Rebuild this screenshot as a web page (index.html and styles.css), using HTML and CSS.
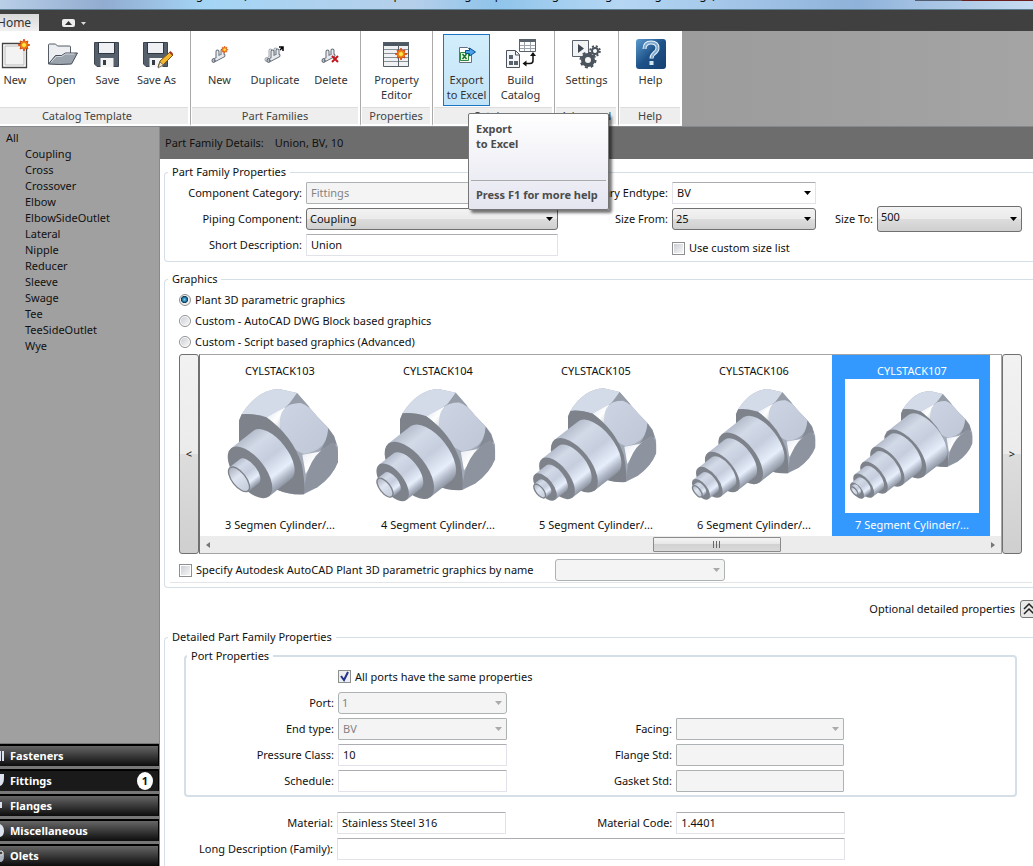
FILE: index.html
```html
<!DOCTYPE html>
<html lang="en">
<head>
<meta charset="utf-8">
<title>Catalog Editor</title>
<link rel="stylesheet" href="styles.css">
</head>
<body>
<header class="titlebar"><span class="titlebar-text">Catalog Editor (C:\Users\Standard\Desktop\DIN catalogs import\Fittings\Catalog buildings Fittings)</span><span class="window-buttons"></span></header>
<nav class="tabbar">
  <button class="tab" type="button">Home</button>
  <button class="tab-toggle" type="button" aria-label="Minimize ribbon">
    <svg width="28" height="8" viewBox="0 0 28 8"><rect width="13" height="8" rx="2" fill="#eee"/><path d="M3 6l3.500-4 3.500 4z" fill="#333"/><path d="M19 3h5l-2.500 3z" fill="#ddd"/></svg>
  </button>
</nav>

<div class="ribbon">
  <section class="group group-template">
    <div class="tools">
      <button class="tool" type="button"><svg class="icon" viewBox="0 0 32 32"><path d="M3.500 5.500h24v24h-24z" fill="#fff" stroke="#444" stroke-width="1.300"/><path d="M6 8h19v19H6z" fill="#f3f3f3" stroke="#bbb"/><use href="#spark" x="19" y="1"/></svg>New</button>
      <button class="tool" type="button"><svg class="icon" viewBox="0 0 32 32"><path d="M2.500 26V7q0-1 1-1h6l2 2h12q1 0 1 1v7" fill="#eceef1" stroke="#555c66"/><path d="M2.500 26l7-8.500h6l4-2.500h12l-6 11q-12 1-23 0z" fill="#9aa2ac" stroke="#474d56"/><path d="M5 24l5.500-5.500h5l4-2.500h9" fill="none" stroke="#d4d9df"/></svg>Open</button>
      <button class="tool" type="button"><svg class="icon" viewBox="0 0 32 32"><use href="#disk"/></svg>Save</button>
      <button class="tool" type="button"><svg class="icon" viewBox="0 0 32 32"><use href="#disk"/><path d="M17 29l2-6L29 14l3 3-10 10z" fill="#f5b72f" stroke="#7a5410"/><path d="M17 30l2-6 3.500 3z" fill="#f6e3c2" stroke="#555" stroke-width=".7"/><path d="M28 14.500l1.500-1.500 3 3-1.500 1.500z" fill="#a33a24"/></svg>Save As</button>
    </div>
    <h2 class="group-name">Catalog Template</h2>
  </section>
  <section class="group group-families">
    <div class="tools">
      <button class="tool" type="button"><svg class="icon" viewBox="0 0 32 32"><use href="#pipe"/><use href="#spark" transform="translate(17 8) scale(.6)"/></svg>New</button>
      <button class="tool" type="button"><svg class="icon" viewBox="0 0 32 32"><use href="#pipe" x="-2" y="-1" opacity=".6"/><use href="#pipe"/><path d="M20 9h4v4M24 9l-3 3" stroke="#000" stroke-width="1.500" fill="none"/></svg>Duplicate</button>
      <button class="tool" type="button"><svg class="icon" viewBox="0 0 32 32"><use href="#pipe" x="-1"/><path d="M17 18l6 6m0-6l-6 6" stroke="#c4161c" stroke-width="2"/></svg>Delete</button>
    </div>
    <h2 class="group-name">Part Families</h2>
  </section>
  <section class="group group-properties">
    <div class="tools">
      <button class="tool" type="button"><svg class="icon" viewBox="0 0 32 32"><path d="M3 4h26v25H3z" fill="#f0f1f3"/><path d="M3 4h26v4H3z" fill="#4c5764"/><path d="M3 11.500h26M3 15.500h26M3 19.500h26M3 23.500h26" stroke="#8a9098"/><path d="M3.500 4.500h25v24h-25zM18.500 5v24" fill="none" stroke="#555d66"/><use href="#spark" x="15" y="10"/></svg>Property<br>Editor</button>
    </div>
    <h2 class="group-name">Properties</h2>
  </section>
  <section class="group group-catalog">
    <div class="tools">
      <button class="tool tool-hot" type="button"><svg class="icon" viewBox="0 0 32 32"><path d="M8.500 9.500h8l4 4v11h-12z" fill="#fff" stroke="#66707c"/><path d="M9.500 14.500h8v8h-8z" fill="#e8f6e8" stroke="#2f8a3c"/><path d="M11.500 16l4 5m0-5l-4 5" stroke="#17752a" stroke-width="1.500"/><path d="M14.500 12.500h4V10l6 4-6 4v-2.500h-4z" fill="#4aa3e8" stroke="#0b4f94"/></svg>Export<br>to Excel</button>
      <button class="tool" type="button"><svg class="icon" viewBox="0 0 32 32"><path d="M14.500 1.500h16v12h-16z" fill="#fff" stroke="#59626d"/><path d="M14 1h17v3H14z" fill="#59626d"/><path d="M15 7.500h15M15 10.500h15M19.500 4v9M25.500 4v9" stroke="#9ba3ad"/><path d="M1.500 12.500h9l4 4v13h-13z" fill="#f5f6f7" stroke="#4a535e"/><path d="M10.500 13v4h4" fill="none" stroke="#4a535e"/><path d="M4 17h4v4H4zM4 23h4v4H4zM9 23h4v4H9z" fill="#59626d"/><path d="M20 25.500h5q3 0 3-3V17" fill="none" stroke="#111" stroke-width="1.500"/><path d="M17.500 25.500l4-3v6zM28 14l-3 4h6z" fill="#111"/></svg>Build<br>Catalog</button>
    </div>
    <h2 class="group-name">Catalog</h2>
  </section>
  <section class="group group-advanced">
    <div class="tools">
      <button class="tool" type="button"><svg class="icon" viewBox="0 0 32 32"><path d="M2.500 2.500h16v16h-16z" fill="#f2f3f5" stroke="#59626d"/><path d="M8 6l6 4.500L8 15z" fill="#3f4852"/><circle cx="18" cy="22" r="5" fill="#f4f4f4" stroke="#4b535d" stroke-width="4"/><circle cx="18" cy="22" r="7.500" fill="none" stroke="#4b535d" stroke-width="2" stroke-dasharray="3 2.900"/><circle cx="25" cy="13" r="3" fill="#fff" stroke="#4b535d" stroke-width="2"/><circle cx="25" cy="13" r="4.800" fill="none" stroke="#4b535d" stroke-width="2" stroke-dasharray="2 1.800"/></svg>Settings</button>
    </div>
    <h2 class="group-name">Advanced</h2>
  </section>
  <section class="group group-help">
    <div class="tools">
      <button class="tool" type="button"><svg class="icon" viewBox="0 0 32 32"><rect x="1" y="1" width="30" height="30" rx="3" fill="url(#helpBlue)"/><path d="M9.500 11q0-6.500 6.500-6.500t6.500 5.500q0 3-3.500 5.500-2.500 2-2.500 5" fill="none" stroke="#e8f3fb" stroke-width="4"/><path d="M9.500 11q0-6.500 6.500-6.500t6.500 5.500q0 3-3.500 5.500-2.500 2-2.500 5" fill="none" stroke="#7fa9cd" stroke-width="2"/><path d="M14.500 23h4v4h-4z" fill="#d5e6f3"/></svg>Help</button>
    </div>
    <h2 class="group-name">Help</h2>
  </section>
  <div class="tooltip" role="tooltip">
    <strong class="tooltip-title">Export<br>to Excel</strong>
    <strong class="tooltip-hint">Press F1 for more help</strong>
  </div>
</div>

<div class="workspace">
  <aside class="sidebar">
    <ul class="tree">
      <li>All
        <ul class="subtree">
          <li>Coupling</li><li>Cross</li><li>Crossover</li><li>Elbow</li><li>ElbowSideOutlet</li><li>Lateral</li><li>Nipple</li><li>Reducer</li><li>Sleeve</li><li>Swage</li><li>Tee</li><li>TeeSideOutlet</li><li>Wye</li>
        </ul>
      </li>
    </ul>
    <div class="accordion">
      <button class="category" type="button"><svg class="cat-icon" viewBox="0 0 6 16"><path d="M0 3h1v10H0zM2 3h2v10H2z" fill="#dde3ee"/></svg>Fasteners</button>
      <button class="category category-open" type="button"><svg class="cat-icon" viewBox="0 0 6 16"><path d="M0 1h4v3Q4 12 0 13z" fill="#dde3ee"/></svg>Fittings<span class="badge">1</span></button>
      <button class="category" type="button"><svg class="cat-icon" viewBox="0 0 6 16"><path d="M0 4h2v6H0z" fill="#dde3ee"/></svg>Flanges</button>
      <button class="category" type="button"><svg class="cat-icon" viewBox="0 0 6 16"><path d="M0 1q4 2 4 7t-4 6z" fill="#dde3ee"/></svg>Miscellaneous</button>
      <button class="category" type="button"><svg class="cat-icon" viewBox="0 0 6 16"><path d="M0 3q4-1 4 5t-4 6z" fill="#aab2bf"/><circle cx="1" cy="5" r="2" fill="#444" stroke="#eee"/></svg>Olets</button>
    </div>
  </aside>

  <main class="details">
    <h1 class="details-head"><span>Part Family Details:</span><span>Union, BV, 10</span></h1>

    <fieldset class="box">
      <legend>Part Family Properties</legend>
      <div class="family-grid">
        <label class="lbl c1 r1" for="cat">Component Category:</label><input class="field c2 r1" id="cat" value="Fittings" disabled>
        <label class="lbl c3 r1" for="pend">Primary Endtype:</label><select class="field c4 r1" id="pend"><option>BV</option></select>
        <label class="lbl c1 r2" for="pipc">Piping Component:</label><select class="field raised c2 r2" id="pipc"><option>Coupling</option></select>
        <label class="lbl c3 r2" for="sfrom">Size From:</label><select class="field raised c4 r2" id="sfrom"><option>25</option></select>
        <label class="lbl c5 r2" for="sto">Size To:</label><select class="field raised tall c6 r2" id="sto"><option>500</option></select>
        <label class="lbl c1 r3" for="sdesc">Short Description:</label><input class="field c2 r3" id="sdesc" value="Union">
        <label class="choice low c4 r3 wide"><input class="check" type="checkbox">Use custom size list</label>
      </div>
    </fieldset>

    <fieldset class="box box-graphics">
      <legend>Graphics</legend>
      <div class="graphics">
        <label class="choice"><input class="radio" type="radio" name="gfx" checked>Plant 3D parametric graphics</label>
        <label class="choice"><input class="radio" type="radio" name="gfx">Custom - AutoCAD DWG Block based graphics</label>
        <label class="choice"><input class="radio" type="radio" name="gfx">Custom - Script based graphics (Advanced)</label>
        <div class="carousel">
          <button class="pager" type="button" aria-label="Previous">&lt;</button>
          <div class="list">
            <div class="tiles">
              <figure class="tile"><span>CYLSTACK103</span><svg class="pic" data-fitting="3"></svg><figcaption>3 Segmen Cylinder/...</figcaption></figure>
              <figure class="tile"><span>CYLSTACK104</span><svg class="pic" data-fitting="4"></svg><figcaption>4 Segment Cylinder/...</figcaption></figure>
              <figure class="tile"><span>CYLSTACK105</span><svg class="pic" data-fitting="5"></svg><figcaption>5 Segment Cylinder/...</figcaption></figure>
              <figure class="tile"><span>CYLSTACK106</span><svg class="pic" data-fitting="6"></svg><figcaption>6 Segment Cylinder/...</figcaption></figure>
              <figure class="tile tile-on"><span>CYLSTACK107</span><svg class="pic" data-fitting="7"></svg><figcaption>7 Segment Cylinder/...</figcaption></figure>
            </div>
            <div class="scroll">
              <svg width="4" height="6" viewBox="0 0 4 6"><path d="M4 0v6L0 3z" fill="#777"/></svg>
              <div class="track"><div class="thumb"></div></div>
              <svg width="4" height="6" viewBox="0 0 4 6"><path d="M0 0v6l4-3z" fill="#777"/></svg>
            </div>
          </div>
          <button class="pager" type="button" aria-label="Next">&gt;</button>
        </div>
        <div class="byname">
          <label class="choice"><input class="check" type="checkbox">Specify Autodesk AutoCAD Plant 3D parametric graphics by name</label>
          <select class="field raised byname-select" aria-label="Graphics name" disabled><option></option></select>
        </div>
      </div>
    </fieldset>

    <div class="optional"><span>Optional detailed properties</span><button class="collapse" type="button" aria-label="Collapse"><svg width="12" height="12" viewBox="0 0 12 12"><path d="M1 6l5-5 5 5M1 11l5-5 5 5" fill="none" stroke="#222" stroke-width="1.500"/></svg></button></div>

    <fieldset class="box">
      <legend>Detailed Part Family Properties</legend>
      <fieldset class="ports">
        <legend>Port Properties</legend>
        <div class="port-grid">
          <label class="choice c2 r1 wide"><input class="check" type="checkbox" checked>All ports have the same properties</label>
          <label class="lbl c1 r2" for="port">Port:</label><select class="field raised c2 r2" id="port" disabled><option>1</option></select>
          <label class="lbl c1 r3" for="endt">End type:</label><select class="field c2 r3" id="endt" disabled><option>BV</option></select>
          <label class="lbl c3 r3" for="facing">Facing:</label><select class="field c4 r3" id="facing" disabled><option></option></select>
          <label class="lbl c1 r4" for="press">Pressure Class:</label><input class="field c2 r4" id="press" value="10">
          <label class="lbl c3 r4" for="flange">Flange Std:</label><input class="field c4 r4" id="flange" disabled>
          <label class="lbl c1 r5" for="sched">Schedule:</label><input class="field c2 r5" id="sched">
          <label class="lbl c3 r5" for="gasket">Gasket Std:</label><input class="field c4 r5" id="gasket" disabled>
        </div>
      </fieldset>
      <div class="material-grid">
        <label class="lbl c1 r1" for="mat">Material:</label><input class="field c2 r1" id="mat" value="Stainless Steel 316">
        <label class="lbl c3 r1" for="mcode">Material Code:</label><input class="field c4 r1" id="mcode" value="1.4401">
        <label class="lbl c1 r2" for="ldesc">Long Description (Family):</label><input class="field long r2" id="ldesc">
      </div>
    </fieldset>
  </main>
</div>

<svg class="defs" aria-hidden="true">
  <defs>
    <linearGradient id="helpBlue" x1="0" y1="0" x2="1" y2="1"><stop offset="0" stop-color="#5b9bd0"/><stop offset=".5" stop-color="#1d5288"/><stop offset="1" stop-color="#163f70"/></linearGradient>
    <linearGradient id="steel"><stop offset="0" stop-color="#b6bdcc"/><stop offset=".2" stop-color="#d2d9e7"/><stop offset=".5" stop-color="#c6cddd"/><stop offset=".78" stop-color="#e6eefb"/><stop offset=".9" stop-color="#b3bac9"/><stop offset="1" stop-color="#8f96a3"/></linearGradient>
    <linearGradient id="bore"><stop offset="0" stop-color="#aab1bd"/><stop offset=".4" stop-color="#dfe6f2"/><stop offset="1" stop-color="#c3cad8"/></linearGradient>
    <linearGradient id="flat" x1="0" y1="0" x2="1" y2="1"><stop offset="0" stop-color="#cdd4e3"/><stop offset="1" stop-color="#bfc6d5"/></linearGradient>
    <linearGradient id="shine" x1="0" y1="0" x2="1" y2="1"><stop offset="0" stop-color="#dfe5f0"/><stop offset=".5" stop-color="#fff"/><stop offset="1" stop-color="#b3bac7"/></linearGradient>
    <g id="spark"><path d="M6 0l1.200 3L10 2 9 4.800 12 6 9 7.200 10 10 7.200 9 6 12 4.800 9 2 10 3 7.200 0 6l3-1.200L2 2l2.800 1z" fill="#f08a12" stroke="#d8420c" stroke-width=".9"/><circle cx="6" cy="6" r="2" fill="#ffe94a"/></g>
    <g id="disk"><path d="M2.500 4.500h24v24H5l-2.500-2.500z" fill="#56606c" stroke="#3c4550"/><path d="M7 4h15v11H7z" fill="#eef0f3"/><path d="M6.500 4.500h16v11h-16z" fill="none" stroke="#2f3740"/><path d="M8.500 20h13v9h-13z" fill="#f4f4f4"/><path d="M11 22h3v5h-3z" fill="#333b45"/></g>
    <g id="pipe" stroke-linecap="round" fill="none"><path d="M10 22.500l9.500-5M13.500 13.500v6l5-2v-5" stroke="#646c76" stroke-width="4"/><path d="M10 22.500l9.500-5M13.500 13.500v6l5-2v-5" stroke="#e6e9ed" stroke-width="2"/><ellipse cx="9.500" cy="22.500" rx="1.500" ry="2" fill="#b3bac2" stroke="#646c76"/></g>
    <g id="head">
      <path d="M0 95L8 76Q55 2 120 0L174 12 236 84 268 117 285 140 297 175V215Q285 260 235 295L195 316H165Q140 312 116 303L0 150Z" fill="#a4abb8"/>
      <path d="M8 76Q55 2 120 0L174 12Q165 42 120 65L82 85Q40 72 8 76Z" fill="#d3dbe9"/>
      <path d="M82 85L140 54Q118 85 125 130Q105 100 82 85Z" fill="url(#shine)"/>
      <path d="M174 12L212 55 185 42 148 48Z" fill="#969da8"/>
      <path d="M135 60Q150 42 185 42 210 50 236 84L268 118Q265 185 195 195 130 170 122 105 122 75 135 60Z" fill="url(#flat)"/>
      <path d="M268 118L285 142 292 165 272 170 240 188Q265 160 268 118Z" fill="#858b96"/>
      <path d="M190 197L240 188 280 163Q230 200 200 255Z" fill="url(#shine)"/>
      <path d="M282 160Q297 175 297 190V220Q280 262 235 295L195 313Q200 200 282 160Z" fill="#8e949f"/>
      <path d="M0 95L8 76Q40 72 82 85 160 140 188 225 200 290 195 316 150 318 116 303L0 160Z" fill="#7d828b"/>
    </g>
  </defs>
</svg>
<script src="fittings.js"></script>
</body>
</html>
```

FILE: fittings.js
```js
// Stepped couplings: hex head [x, y, scale], then each cylinder from the
// widest to the narrowest as [centre x, centre y, radius, length].
const fittings = {
  3: { box: 162, head: [240, 132, 1], segs: [[273, 382, 92, 85], [240, 403, 46, 39]] },
  4: { box: 636, head: [723, 132, 0.96], segs: [[751, 376, 102, 84], [701, 412, 67, 55], [678, 428, 36, 27]] },
  5: { box: 90, head: [207, 130, 0.89], segs: [[226, 361, 97, 90], [174, 400, 74, 64], [138, 426, 49, 42], [122, 438, 27, 20]] },
  6: { box: 564, head: [711, 132, 0.8], segs: [[725, 340, 92, 82], [670, 381, 72, 66], [631, 412, 55, 52], [606, 433, 37, 34], [595, 439, 22, 14]] },
  7: { box: 243, head: [411, 138, 0.72], segs: [[424, 327, 87, 79], [370, 365, 71, 66], [330, 398, 57, 51], [299, 422, 43, 38], [279, 437, 29, 26], [271, 438, 17, 10]] }
};

document.querySelectorAll("[data-fitting]").forEach((svg) => {
  const { box, head, segs } = fittings[svg.dataset.fitting];
  svg.setAttribute("viewBox", `${box} 102 402 402`);
  const cylinders = segs.map(([x, y, r, len], i) => {
    const ry = r * 0.49;
    const open = i === segs.length - 1;
    const face = open
      ? `<ellipse rx="${r - 2}" ry="${ry - 2}" fill="url(#bore)" stroke="#7d828b" stroke-width="4"/>`
      : `<ellipse rx="${r}" ry="${ry}" fill="#7d828b"/>`;
    return `<g transform="translate(${x} ${y}) rotate(52)">
      <path d="M${-r} 0V${-len}A${r} ${ry} 0 0 1 ${r} ${-len}V0Z" fill="url(#steel)"/>${face}</g>`;
  });
  svg.innerHTML = `<use href="#head" transform="translate(${head[0]} ${head[1]}) scale(${head[2]})"/>${cylinders.join("")}`;
});
```

FILE: styles.css
```css
* { box-sizing: border-box; }
body {
  margin: 0;
  height: 100vh;
  overflow: hidden;
  display: flex;
  flex-direction: column;
  background: #fff;
  color: #111;
  font: 11px/16px "Noto Sans", "Open Sans", sans-serif;
}
button, input, select { font: inherit; color: inherit; margin: 0; }
button { padding: 0; border: 0; background: none; }
h1, h2, ul, figure, fieldset { margin: 0; padding: 0; }
h1, h2 { font: inherit; }
.defs { position: absolute; width: 0; height: 0; }

.titlebar {
  flex: none;
  height: 10px;
  display: flex;
  align-items: flex-end;
  justify-content: space-between;
  overflow: hidden;
  background: linear-gradient(90deg, #b9cfe8, #91acd0 10%, #a5d5f5 20%, #b5cfea 40%, #8fc4ea 48%, #b5d7f4 60%, #8fb2da 83%, #c6dcf2);
  border-bottom: 1px solid #5b7d92;
}
.titlebar-text { padding: 0 0 6px 160px; font-size: 12px; white-space: nowrap; line-height: 16px; }
.window-buttons { width: 118px; height: 1px; align-self: flex-start; flex: none; background: linear-gradient(90deg, #555e70 40%, #6b1e1e 40%); }

.tabbar { flex: none; height: 21px; background: #404040; display: flex; align-items: flex-end; gap: 23px; }
.tab { width: 39px; height: 17px; background: linear-gradient(#d8d8d8, #f0f0f0); color: #333; font-size: 12px; line-height: 16px; text-align: left; text-indent: -3px; }
.tab-toggle { height: 17px; display: flex; align-items: center; }

.ribbon { flex: none; position: relative; display: flex; height: 96px; background: linear-gradient(90deg, #8c8c8c, #a4a4a4); border-bottom: 1px solid #85898c; }
.group { display: flex; flex-direction: column; background: #fff; border-right: 1px solid #aaa; border-bottom: 2px solid #fff; }
.group-template { width: 191px; }
.group-families { width: 170px; }
.group-properties { width: 72px; }
.group-catalog { width: 122px; }
.group-advanced { width: 64px; }
.group-help { width: 63px; border-right: 0; }
.tools { flex: 1; display: flex; justify-content: center; align-items: flex-start; padding-top: 3px; }
.tool { display: flex; flex-direction: column; align-items: center; height: 72px; padding-top: 3px; line-height: 15px; text-align: center; color: #333; white-space: nowrap; border: 1px solid transparent; }
.icon { width: 32px; height: 32px; margin-bottom: 2px; flex: none; }
.group-template .tools { display: grid; grid-template-columns: 31px 62px 30px 68px; }
.group-families .tools { display: grid; grid-template-columns: 57px 54px 58px; }
.group-catalog .tools { justify-content: flex-start; padding-left: 10px; gap: 7px; }
.group-catalog .tool { width: 47px; }
.tool-hot { border-color: #1b74c5; background: linear-gradient(#d3eefb, #c1e3f8); }
.group-name { height: 17px; margin: 0 2px 0 1px; background: #eee; border-top: 1px solid #ddd; color: #444; text-align: center; }
.group-template .group-name { margin-left: 0; padding-right: 14px; }

.tooltip {
  position: absolute;
  z-index: 2;
  left: 468px;
  top: 82px;
  width: 141px;
  height: 97px;
  display: flex;
  flex-direction: column;
  justify-content: space-between;
  border: 1px solid #767676;
  border-radius: 2px;
  background: linear-gradient(#fff, #e4e5f0);
  box-shadow: 3px 3px 3px #0008;
  color: #4c4c4c;
  line-height: 15px;
}
.tooltip-title { padding: 7px 7px 0; }
.tooltip-hint { margin: 0 2px; padding: 6px 5px 7px; border-top: 1px solid #aaa; white-space: nowrap; }

.workspace { flex: 1; min-height: 0; display: flex; }
.sidebar { width: 160px; flex: none; display: flex; flex-direction: column; justify-content: space-between; background: #a0a0a0; border-right: 1px solid #858a90; }
.tree, .subtree { list-style: none; }
.tree { padding: 3px 0 0 6px; color: #111; }
.subtree { padding-left: 19px; }
.accordion { display: flex; flex-direction: column; gap: 3px; padding-top: 1px; background: #777; }
.category { height: 22px; display: flex; align-items: center; gap: 4px; background: linear-gradient(#666, #0c0c0c); border: solid #000; border-width: 2px 1px 0 0; color: #fff; font-weight: bold; }
.category-open { background: #1a1a1a; }
.cat-icon { width: 6px; height: 16px; }
.badge { margin: 0 5px 0 auto; width: 16px; height: 18px; line-height: 18px; border-radius: 50%; background: #fff; color: #111; text-align: center; }

.details { flex: 1; min-width: 0; overflow: hidden; }
.details-head { height: 32px; line-height: 32px; background: #6d6d6d; padding-left: 5px; display: flex; gap: 11px; color: #111; margin-bottom: 5px; }
.box { min-width: 0; margin-left: 4px; border: 1px solid #d5dfe8; border-right: 0; border-radius: 4px 0 0 4px; }
legend { margin-left: 3px; padding: 0 4px; }
.lbl { text-align: right; white-space: nowrap; align-self: center; justify-self: end; }
.choice { display: flex; align-items: center; gap: 4px; white-space: nowrap; }
.choice.low { align-self: end; }
.c1 { grid-column: 1; } .c2 { grid-column: 2; } .c3 { grid-column: 3; }
.c4 { grid-column: 4; } .c5 { grid-column: 5; } .c6 { grid-column: 6; }
.r1 { grid-row: 1; } .r2 { grid-row: 2; } .r3 { grid-row: 3; } .r4 { grid-row: 4; } .r5 { grid-row: 5; }
.c2.wide { grid-column: 2 / span 3; }
.c4.wide { grid-column: 4 / span 3; }

.field { width: 100%; min-width: 0; height: 22px; padding: 0 4px; background: #fff; border: 1px solid #e2e3ea; border-top-color: #abadb3; border-radius: 1px; }
select.field { appearance: none; background-image: url("data:image/svg+xml,%3Csvg xmlns='http://www.w3.org/2000/svg' width='7' height='4'%3E%3Cpath d='M0 0h7L3.500 4z' fill='%23000'/%3E%3C/svg%3E"); background-repeat: no-repeat; background-position: right 4px center; }
select.raised { padding: 0 3px; border-color: #707070; border-radius: 3px; background-color: #ddd; background-image: url("data:image/svg+xml,%3Csvg xmlns='http://www.w3.org/2000/svg' width='7' height='4'%3E%3Cpath d='M0 0h7L3.500 4z' fill='%23000'/%3E%3C/svg%3E"), linear-gradient(#f2f2f2, #ebebeb 50%, #ddd 50%, #cfcfcf); background-position: right 4px center, 0 0; }
.field.tall { height: 26px; align-self: center; padding-bottom: 4px; }
.field:disabled { background-color: #f4f4f4; border-color: #adb2b5; color: #838383; opacity: 1; }
select.field:disabled { background-image: url("data:image/svg+xml,%3Csvg xmlns='http://www.w3.org/2000/svg' width='7' height='4'%3E%3Cpath d='M0 0h7L3.500 4z' fill='%23aaa'/%3E%3C/svg%3E"); }
.check, .radio { appearance: none; flex: none; width: 13px; height: 13px; border: 1px solid #8e8f8f; background: linear-gradient(135deg, #cbcfd5, #f6f6f6) content-box #f4f4f4; padding: 1px; }
.radio { width: 12px; height: 12px; border-radius: 50%; }
.radio:checked { background: radial-gradient(circle at 45% 45%, #7fd0ee, #1b6f9c 30%, #0f3550 42%, #eee 50%); }
.check:checked { background: url("data:image/svg+xml,%3Csvg xmlns='http://www.w3.org/2000/svg' width='11' height='11'%3E%3Cpath d='M2 5l3 4 4-8' fill='none' stroke='%2321328a' stroke-width='2'/%3E%3C/svg%3E") center no-repeat #eceef1; }

.family-grid { display: grid; grid-template-columns: 137px minmax(0, 252fr) 106px minmax(0, 144fr) 53px minmax(0, 145fr); grid-auto-rows: 23px; gap: 3px 4px; align-items: center; padding: 1px 11px 5px 0; }
.box-graphics { margin-top: 9px; }
.graphics { padding: 2px 11px 4px 14px; }
.graphics > .choice { height: 21px; }
.carousel { margin-top: 2px; height: 200px; display: flex; }
.pager { width: 20px; flex: none; border: 1px solid #707070; border-radius: 3px; background: linear-gradient(#f2f2f2, #ebebeb 50%, #ddd 50%, #cfcfcf); }
.list { flex: 1; min-width: 0; border: 1px solid #a5a5a5; border-left-color: #707070; display: flex; flex-direction: column; }
.tiles { flex: 1; display: flex; overflow: hidden; }
.tile { flex: none; width: 158px; padding: 8px 0 0 2px; display: flex; flex-direction: column; align-items: center; }
.tile-on { background: #3399ff; color: #fff; }
.pic { width: 134px; height: 134px; background: #fff; margin-bottom: 4px; flex: none; }
.scroll { height: 17px; display: flex; align-items: center; padding: 0 6px; background: #ececec; }
.track { flex: 1; display: flex; }
.track::before { content: ""; flex: 444; }
.track::after { content: ""; flex: 211; }
.thumb { flex: 126; height: 15px; border: 1px solid #8b8b8b; border-radius: 1px; background: linear-gradient(90deg, #666 1px, #0000 1px 3px, #666 3px 4px, #0000 4px 6px, #666 6px 7px, #0000 7px) center / 8px 7px no-repeat, linear-gradient(#f4f4f4, #e6e6e6 50%, #d2d2d2 50%, #dadada); }
.byname { height: 29px; margin: 0 -10px 0 -9px; padding: 4px 0 0 9px; display: flex; align-items: center; gap: 10px; border-bottom: 1px solid #e3e6e9; }
.byname .choice { flex: 0 0 366px; }
.byname-select { width: 170px; }

.optional { display: flex; justify-content: flex-end; align-items: center; gap: 5px; height: 41px; overflow: hidden; }
.collapse { width: 18px; height: 18px; margin-right: -5px; border: 1px solid #777; border-radius: 3px; background: #e8e8e8; display: flex; align-items: center; justify-content: center; }

.ports { min-width: 0; margin: 3px 16px 0 19px; border: 2px solid #d5dfe8; border-radius: 4px; }
.ports legend { margin-left: 1px; }
.port-grid { display: grid; grid-template-columns: 148px minmax(0, 169fr) 161px minmax(0, 168fr) minmax(0, 167fr); grid-auto-rows: 23px; gap: 3px 4px; align-items: center; padding: 1px 0 3px; }
.material-grid { display: grid; grid-template-columns: 168px minmax(0, 169fr) 162px minmax(0, 168fr) minmax(0, 184fr); grid-auto-rows: 23px; gap: 3px 4px; align-items: center; padding: 14px 0 40px; }
.long { grid-column: 2 / span 3; }
```
